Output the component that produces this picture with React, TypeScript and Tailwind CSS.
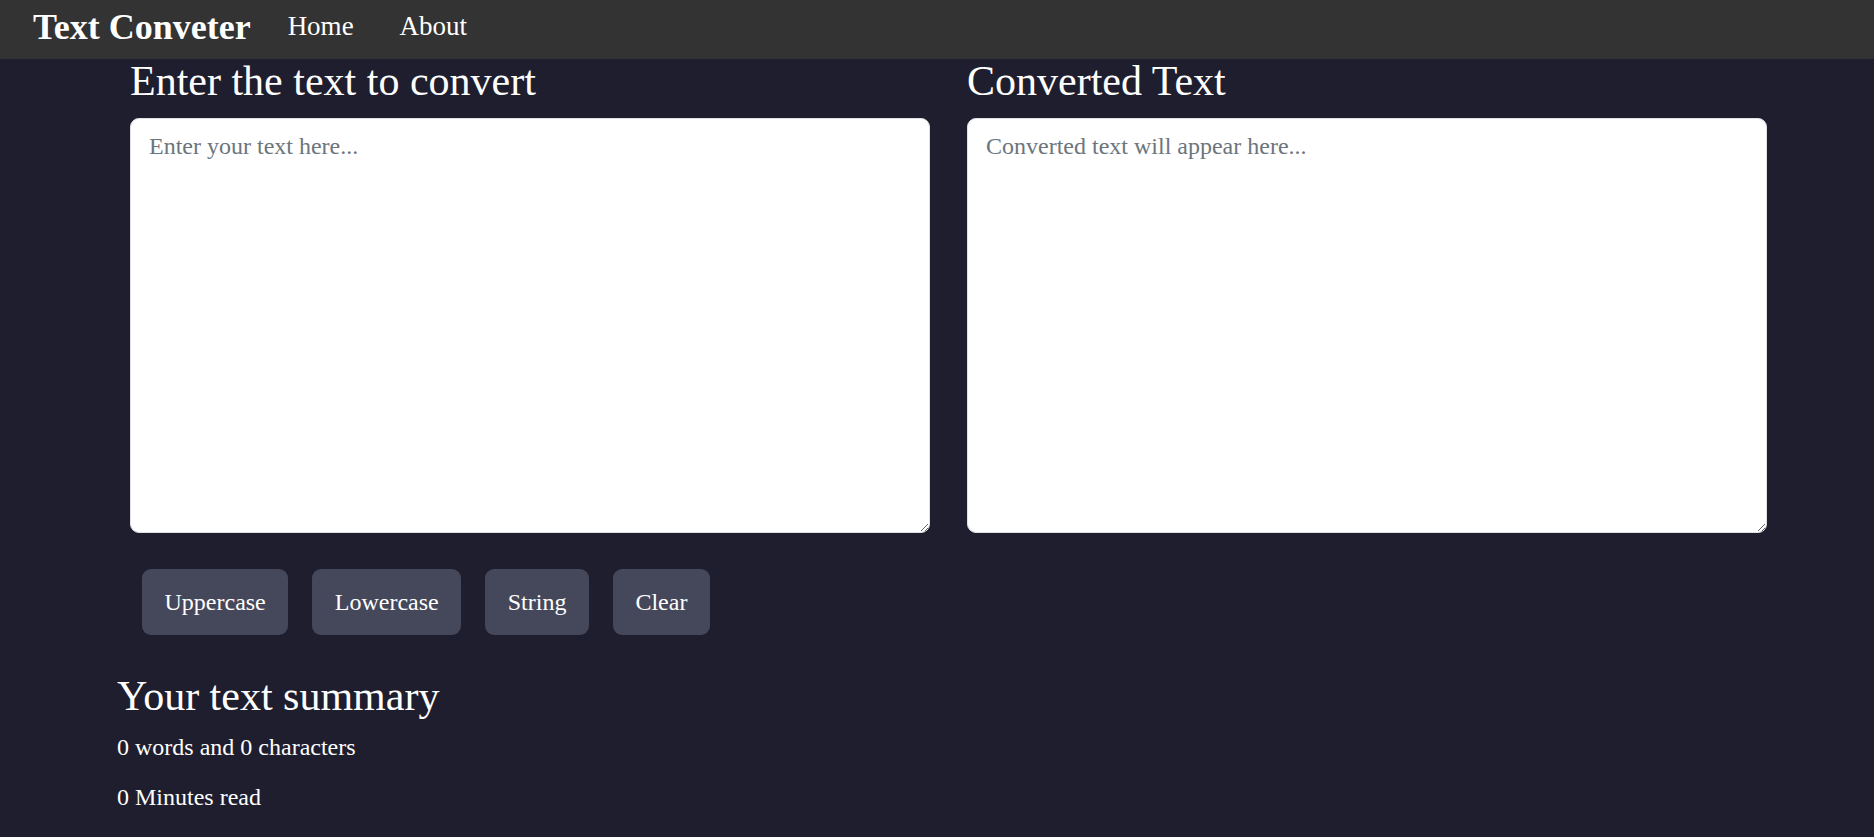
import { useState } from 'react';

export default function App() {
  const [text, setText] = useState('');
  const [out, setOut] = useState('');

  const words = text.split(/\s+/).filter(w => w.length > 0).length;
  const minutes = Math.round(words * 0.008);

  return (
    <div className="min-h-screen bg-[#1e1e2e] text-white font-['Liberation_Serif','Times_New_Roman',serif]">
      {/* Navbar */}
      <nav className="h-[59px] bg-[#333333] flex items-center pl-[33px] pb-[6px]">
        <span className="text-[36px] font-bold leading-none">Text Conveter</span>
        <div className="flex items-center gap-[46px] ml-[37px] text-[27px] leading-none">
          <a href="#">Home</a>
          <a href="#">About</a>
        </div>
      </nav>

      {/* Editors */}
      <div className="grid grid-cols-2 gap-[37px] pl-[130px] pr-[107px]">
        <div className="flex flex-col">
          <h1 className="text-[42px] leading-[42px] mt-[1px] mb-[16px]">Enter the text to convert</h1>
          <textarea
            value={text}
            onChange={e => setText(e.target.value)}
            placeholder="Enter your text here..."
            className="h-[415px] w-full rounded-[9px] border border-[#dee2e6] bg-white text-[#212529] px-[18px] py-[9px] text-[24px] leading-[1.5] placeholder:text-[#6c757d] outline-none resize"
          />
        </div>
        <div className="flex flex-col">
          <h1 className="text-[42px] leading-[42px] mt-[1px] mb-[16px]">Converted Text</h1>
          <textarea
            value={out}
            readOnly
            placeholder="Converted text will appear here..."
            className="h-[415px] w-full rounded-[9px] border border-[#dee2e6] bg-white text-[#212529] px-[18px] py-[9px] text-[24px] leading-[1.5] placeholder:text-[#6c757d] outline-none resize"
          />
        </div>
      </div>

      {/* Buttons */}
      <div className="flex gap-[24px] pl-[142px] mt-[36px]">
        <button onClick={() => setOut(text.toUpperCase())} className="h-[66px] px-[22.5px] rounded-[9px] bg-[#45475a] text-[24px] leading-none">Uppercase</button>
        <button onClick={() => setOut(text.toLowerCase())} className="h-[66px] px-[22.5px] rounded-[9px] bg-[#45475a] text-[24px] leading-none">Lowercase</button>
        <button onClick={() => setOut(JSON.stringify(text))} className="h-[66px] px-[22.5px] rounded-[9px] bg-[#45475a] text-[24px] leading-none">String</button>
        <button onClick={() => { setText(''); setOut(''); }} className="h-[66px] px-[22.5px] rounded-[9px] bg-[#45475a] text-[24px] leading-none">Clear</button>
      </div>

      {/* Summary */}
      <div className="pl-[117px] mt-[40px] pb-[6px]">
        <h2 className="text-[42px] leading-[42px] mb-[17px]">Your text summary</h2>
        <p className="text-[24px] leading-[27px] mb-[23px]">{words} words and {text.length} characters</p>
        <p className="text-[24px] leading-[27px]">{minutes} Minutes read</p>
      </div>
    </div>
  );
}
